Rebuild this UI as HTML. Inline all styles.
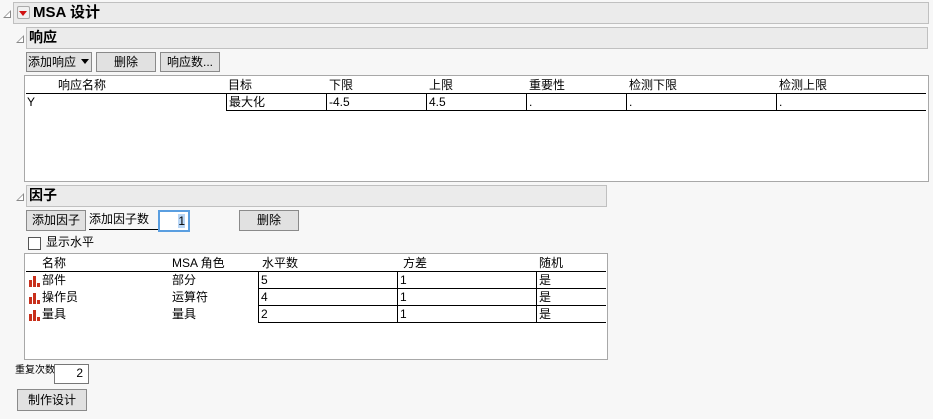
<!DOCTYPE html>
<html><head><meta charset="utf-8"><style>
*{box-sizing:border-box;margin:0;padding:0}
body{width:933px;height:419px;background:#f7f7f7;font-family:"Liberation Sans","Noto Sans CJK SC",sans-serif;font-size:12px;color:#000;position:relative;overflow:hidden}
.a{position:absolute;white-space:nowrap;line-height:15px}
.hdr{position:absolute;background:#ebebeb;border:1px solid #c0c0c0;font-weight:bold;font-size:14px;line-height:19px}
.btn{position:absolute;background:#e1e1e1;border:1px solid #8a8a8a;text-align:center;line-height:18px}
.tbl{position:absolute;background:#fff;border:1px solid #a8a8a8}
.tri{position:absolute;width:0;height:0;border-left:8px solid transparent;border-bottom:8px solid #888}
.tri:after{content:"";position:absolute;left:-6px;top:2px;border-left:5px solid transparent;border-bottom:5px solid #fff}
.hl{position:absolute;height:2px;background:#000}
.vl{position:absolute;width:1px;background:#000}
.bar{position:absolute;width:11px;height:11px}
</style></head><body>
<div class="tri" style="left:3px;top:10px"></div>
<div class="hdr" style="left:13px;top:2px;width:916px;height:22px;padding-left:19px;font-size:15px;line-height:20px">MSA 设计</div>
<div class="a" style="left:17px;top:6px;width:13px;height:13px;border:1px solid #aaa;border-radius:2px;background:#f0f0f0"></div>
<div class="a" style="left:19px;top:11px;width:0;height:0;border-left:4px solid transparent;border-right:4px solid transparent;border-top:5px solid #d01010"></div>

<div class="tri" style="left:16px;top:35px"></div>
<div class="hdr" style="left:26px;top:27px;width:902px;height:22px;padding-left:2px">响应</div>

<div class="btn" style="left:26px;top:52px;width:66px;height:20px;text-align:left;padding-left:1px">添加响应 <span style="display:inline-block;width:0;height:0;border-left:4px solid transparent;border-right:4px solid transparent;border-top:5px solid #000;vertical-align:2px;margin-left:2px"></span></div>
<div class="btn" style="left:96px;top:52px;width:60px;height:20px">删除</div>
<div class="btn" style="left:160px;top:52px;width:60px;height:20px">响应数...</div>

<div class="tbl" style="left:24px;top:75px;width:905px;height:107px"></div>
<div class="a" style="left:58px;top:78px">响应名称</div>
<div class="a" style="left:228px;top:78px">目标</div>
<div class="a" style="left:329px;top:78px">下限</div>
<div class="a" style="left:429px;top:78px">上限</div>
<div class="a" style="left:529px;top:78px">重要性</div>
<div class="a" style="left:629px;top:78px">检测下限</div>
<div class="a" style="left:779px;top:78px">检测上限</div>
<div class="hl" style="left:26px;top:93px;width:900px;height:1px"></div>
<div class="hl" style="left:226px;top:110px;width:700px;height:1px"></div>
<div class="vl" style="left:226px;top:94px;height:17px"></div>
<div class="vl" style="left:326px;top:94px;height:17px"></div>
<div class="vl" style="left:426px;top:94px;height:17px"></div>
<div class="vl" style="left:526px;top:94px;height:17px"></div>
<div class="vl" style="left:626px;top:94px;height:17px"></div>
<div class="vl" style="left:776px;top:94px;height:17px"></div>
<div class="a" style="left:27px;top:95px">Y</div>
<div class="a" style="left:229px;top:95px">最大化</div>
<div class="a" style="left:329px;top:95px">-4.5</div>
<div class="a" style="left:429px;top:95px">4.5</div>
<div class="a" style="left:529px;top:95px">.</div>
<div class="a" style="left:629px;top:95px">.</div>
<div class="a" style="left:779px;top:95px">.</div>

<div class="tri" style="left:16px;top:193px"></div>
<div class="hdr" style="left:26px;top:185px;width:581px;height:22px;padding-left:2px">因子</div>

<div class="btn" style="left:26px;top:210px;width:60px;height:21px;line-height:19px">添加因子</div>
<div class="a" style="left:89px;top:212px;width:69px;border-bottom:1px solid #000;height:18px">添加因子数</div>
<div class="a" style="left:158px;top:210px;width:32px;height:22px;border:2px solid #5a9ee0;background:#fff;text-align:right;padding-right:3px;line-height:18px"><span style="background:#b8d6f6">1</span></div>
<div class="btn" style="left:239px;top:210px;width:60px;height:21px;line-height:19px">删除</div>
<div class="a" style="left:28px;top:237px;width:13px;height:13px;border:1px solid #555;background:#fff"></div>
<div class="a" style="left:46px;top:235px">显示水平</div>

<div class="tbl" style="left:24px;top:253px;width:584px;height:107px"></div>
<div class="a" style="left:42px;top:256px">名称</div>
<div class="a" style="left:172px;top:256px">MSA 角色</div>
<div class="a" style="left:262px;top:256px">水平数</div>
<div class="a" style="left:403px;top:256px">方差</div>
<div class="a" style="left:539px;top:256px">随机</div>
<div class="hl" style="left:26px;top:271px;width:580px;height:1px"></div>
<div class="hl" style="left:258px;top:288px;width:348px;height:1px"></div>
<div class="hl" style="left:258px;top:305px;width:348px;height:1px"></div>
<div class="hl" style="left:258px;top:322px;width:348px;height:1px"></div>
<div class="vl" style="left:258px;top:272px;height:51px"></div>
<div class="vl" style="left:397px;top:272px;height:51px"></div>
<div class="vl" style="left:536px;top:272px;height:51px"></div>
<svg class="bar" style="left:29px;top:276px" viewBox="0 0 11 11"><path d="M0 4h3v7H0zM4 0h3v11H4zM8 7h3v4H8z" fill="#c8301c"/></svg>
<svg class="bar" style="left:29px;top:293px" viewBox="0 0 11 11"><path d="M0 4h3v7H0zM4 0h3v11H4zM8 7h3v4H8z" fill="#c8301c"/></svg>
<svg class="bar" style="left:29px;top:310px" viewBox="0 0 11 11"><path d="M0 4h3v7H0zM4 0h3v11H4zM8 7h3v4H8z" fill="#c8301c"/></svg>
<div class="a" style="left:42px;top:273px">部件</div>
<div class="a" style="left:42px;top:290px">操作员</div>
<div class="a" style="left:42px;top:307px">量具</div>
<div class="a" style="left:172px;top:273px">部分</div>
<div class="a" style="left:172px;top:290px">运算符</div>
<div class="a" style="left:172px;top:307px">量具</div>
<div class="a" style="left:261px;top:273px">5</div>
<div class="a" style="left:261px;top:290px">4</div>
<div class="a" style="left:261px;top:307px">2</div>
<div class="a" style="left:400px;top:273px">1</div>
<div class="a" style="left:400px;top:290px">1</div>
<div class="a" style="left:400px;top:307px">1</div>
<div class="a" style="left:539px;top:273px">是</div>
<div class="a" style="left:539px;top:290px">是</div>
<div class="a" style="left:539px;top:307px">是</div>

<div class="a" style="left:15px;top:365px;font-size:10px;line-height:12px">重复次数</div>
<div class="a" style="left:54px;top:364px;width:35px;height:20px;border:1px solid #777;background:#fff;text-align:right;padding-right:5px;line-height:17px">2</div>
<div class="btn" style="left:17px;top:389px;width:70px;height:22px;line-height:20px">制作设计</div>
</body></html>
